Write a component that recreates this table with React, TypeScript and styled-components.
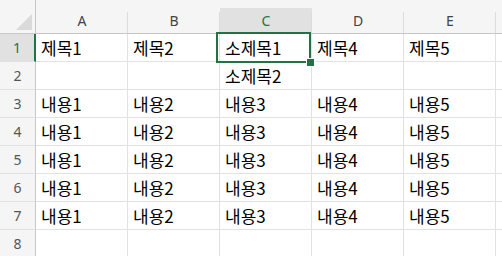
import React from "react";
import styled, { createGlobalStyle } from "styled-components";

const GlobalStyle = createGlobalStyle`
  html, body { margin: 0; padding: 0; background: #ffffff; }
  body { width: 502px; height: 256px; overflow: hidden; }
`;

const ACCENT = "#217346";
const GRID = "#e1e1e1";

const Sheet = styled.div`
  position: relative;
  display: grid;
  grid-template-columns: 36px repeat(5, 92px) 1fr;
  grid-template-rows: 34px repeat(8, 28px);
  width: 502px;
  height: 256px;
  overflow: hidden;
  background: #ffffff;
  font-family: "Noto Sans CJK KR", "Noto Sans", sans-serif;
`;

const Corner = styled.div`
  display: flex;
  align-items: flex-end;
  justify-content: flex-end;
  padding: 0 3px 3px 0;
  background: #f5f5f5;
  border-right: 1px solid #c8c8c8;
  border-bottom: 1px solid #c8c8c8;
`;

const ColHead = styled.div<{ $active?: boolean }>`
  position: relative;
  display: flex;
  align-items: center;
  justify-content: center;
  padding-top: 8px;
  box-sizing: border-box;
  background: linear-gradient(
    to bottom,
    #f5f5f5 0,
    #f5f5f5 8px,
    ${(p) => (p.$active ? "#e1e1e1" : "#f5f5f5")} 8px
  );
  border-bottom: 1px solid #c8c8c8;
  color: ${(p) => (p.$active ? ACCENT : "#444444")};
  font-family: "Noto Sans", "Liberation Sans", sans-serif;
  font-size: 14px;

  &::after {
    content: "";
    position: absolute;
    right: 0;
    top: 12px;
    bottom: 0;
    width: 1px;
    background: #dcdcdc;
  }
`;

const RowHead = styled.div<{ $active?: boolean }>`
  display: flex;
  align-items: center;
  justify-content: center;
  background: ${(p) => (p.$active ? "#e1e1e1" : "#f5f5f5")};
  border-right: ${(p) => (p.$active ? `2px solid ${ACCENT}` : "1px solid #c8c8c8")};
  border-bottom: 1px solid ${GRID};
  color: ${(p) => (p.$active ? ACCENT : "#555555")};
  font-family: "Noto Sans", "Liberation Sans", sans-serif;
  font-size: 14px;
`;

const Cell = styled.div`
  display: flex;
  align-items: center;
  padding: 0 4px 0 5px;
  border-right: 1px solid ${GRID};
  border-bottom: 1px solid ${GRID};
  color: #000000;
  font-size: 17px;
  white-space: nowrap;
  overflow: visible;
  min-width: 0;
`;

const Selection = styled.div`
  position: absolute;
  left: 216px;
  top: 32px;
  width: 95px;
  height: 31px;
  box-sizing: border-box;
  border: 2px solid ${ACCENT};
  pointer-events: none;
`;

const FillHandle = styled.div`
  position: absolute;
  right: -5px;
  bottom: -5px;
  width: 7px;
  height: 7px;
  box-sizing: border-box;
  background: ${ACCENT};
  outline: 1px solid #ffffff;
`;

const columns = ["A", "B", "C", "D", "E", ""];

const rows: string[][] = [
  ["제목1", "제목2", "소제목1", "제목4", "제목5", ""],
  ["", "", "소제목2", "", "", ""],
  ["내용1", "내용2", "내용3", "내용4", "내용5", ""],
  ["내용1", "내용2", "내용3", "내용4", "내용5", ""],
  ["내용1", "내용2", "내용3", "내용4", "내용5", ""],
  ["내용1", "내용2", "내용3", "내용4", "내용5", ""],
  ["내용1", "내용2", "내용3", "내용4", "내용5", ""],
  ["", "", "", "", "", ""],
];

export default function App() {
  return (
    <>
      <GlobalStyle />
      <Sheet>
        <Corner>
          <svg width="16" height="16" viewBox="0 0 16 16">
            <polygon points="16,0 16,16 0,16" fill="#dadada" />
          </svg>
        </Corner>
        {columns.map((c, i) => (
          <ColHead key={`h${i}`} $active={c === "C"}>
            {c}
          </ColHead>
        ))}
        {rows.map((row, r) => (
          <React.Fragment key={`r${r}`}>
            <RowHead $active={r === 0}>{r + 1}</RowHead>
            {row.map((v, c) => (
              <Cell key={`c${r}-${c}`}>{v}</Cell>
            ))}
          </React.Fragment>
        ))}
        <Selection>
          <FillHandle />
        </Selection>
      </Sheet>
    </>
  );
}
